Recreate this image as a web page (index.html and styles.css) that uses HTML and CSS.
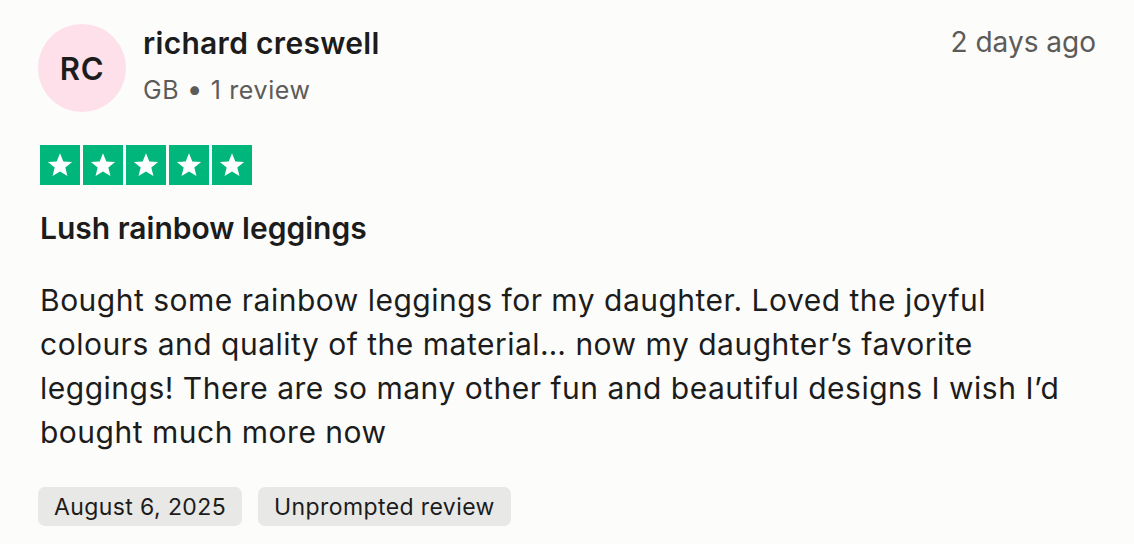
FILE: index.html
```html
<!DOCTYPE html>
<html lang="en">
<head>
<meta charset="utf-8">
<link rel="stylesheet" href="styles.css">
</head>
<body>
<article class="review">
  <header class="head">
    <div class="avatar">RC</div>
    <div class="who">
      <div class="name">richard creswell</div>
      <div class="meta">GB <span class="dot">•</span> 1 review</div>
    </div>
    <div class="when">2 days ago</div>
  </header>
  <div class="stars">
    <span class="star"><svg viewBox="0 0 24 24"><path d="M12 3.2l2.5 6.1 6.6.4-5.1 4.2 1.6 6.4L12 16.8l-5.6 3.5 1.6-6.4-5.1-4.2 6.6-.4z" fill="#fff"/></svg></span>
    <span class="star"><svg viewBox="0 0 24 24"><path d="M12 3.2l2.5 6.1 6.6.4-5.1 4.2 1.6 6.4L12 16.8l-5.6 3.5 1.6-6.4-5.1-4.2 6.6-.4z" fill="#fff"/></svg></span>
    <span class="star"><svg viewBox="0 0 24 24"><path d="M12 3.2l2.5 6.1 6.6.4-5.1 4.2 1.6 6.4L12 16.8l-5.6 3.5 1.6-6.4-5.1-4.2 6.6-.4z" fill="#fff"/></svg></span>
    <span class="star"><svg viewBox="0 0 24 24"><path d="M12 3.2l2.5 6.1 6.6.4-5.1 4.2 1.6 6.4L12 16.8l-5.6 3.5 1.6-6.4-5.1-4.2 6.6-.4z" fill="#fff"/></svg></span>
    <span class="star"><svg viewBox="0 0 24 24"><path d="M12 3.2l2.5 6.1 6.6.4-5.1 4.2 1.6 6.4L12 16.8l-5.6 3.5 1.6-6.4-5.1-4.2 6.6-.4z" fill="#fff"/></svg></span>
  </div>
  <h2 class="title">Lush rainbow leggings</h2>
  <p class="body">Bought some rainbow leggings for my daughter. Loved the joyful colours and quality of the material… now my daughter’s favorite leggings! There are so many other fun and beautiful designs I wish I’d bought much more now</p>
  <div class="tags">
    <span class="tag">August 6, 2025</span>
    <span class="tag">Unprompted review</span>
  </div>
</article>
</body>
</html>
```
FILE: styles.css
```css
html, body {
  margin: 0;
  padding: 0;
  background: #fcfcfb;
}
body {
  font-family: Inter, "Noto Sans", sans-serif;
  color: #1c1c1c;
}
.review {
  padding: 24px 38px 0 38px;
  width: 1058px;
}
.head {
  display: flex;
  align-items: flex-start;
}
.avatar {
  width: 88px;
  height: 88px;
  border-radius: 50%;
  background: #fde0ea;
  display: flex;
  align-items: center;
  justify-content: center;
  font-size: 31px;
  font-weight: 600;
  letter-spacing: 0.8px;
  line-height: 1;
  color: #1c1c1c;
  flex: none;
}
.who {
  margin-left: 17px;
  flex: 1;
  padding-top: 1px;
}
.name {
  font-size: 30px;
  font-weight: 600;
  line-height: 36px;
  letter-spacing: 0.3px;
}
.meta {
  margin-top: 13px;
  font-size: 25px;
  line-height: 30px;
  letter-spacing: 0.6px;
  color: #5c5b58;
}
.dot {
  font-size: 28px;
}
.when {
  font-size: 28px;
  color: #5c5b58;
  line-height: 36px;
}
.stars {
  display: flex;
  gap: 3px;
  margin-top: 33px;
  margin-left: 2px;
}
.star {
  width: 40px;
  height: 40px;
  background: #00b67a;
  display: flex;
  align-items: center;
  justify-content: center;
}
.star svg {
  width: 32px;
  height: 32px;
}
.title {
  margin: 23px 0 0 2px;
  font-size: 30px;
  font-weight: 600;
  line-height: 40px;
  letter-spacing: 0;
}
.body {
  margin: 30px 0 0 2px;
  font-size: 30px;
  line-height: 44px;
  letter-spacing: 0.5px;
  width: 1040px;
}
.tags {
  display: flex;
  gap: 16px;
  margin-top: 33px;
}
.tag {
  background: #e8e8e6;
  border-radius: 7px;
  padding: 0 16px;
  height: 39px;
  display: flex;
  align-items: center;
  font-size: 23px;
  letter-spacing: 0.4px;
  color: #1c1c1c;
}
```
